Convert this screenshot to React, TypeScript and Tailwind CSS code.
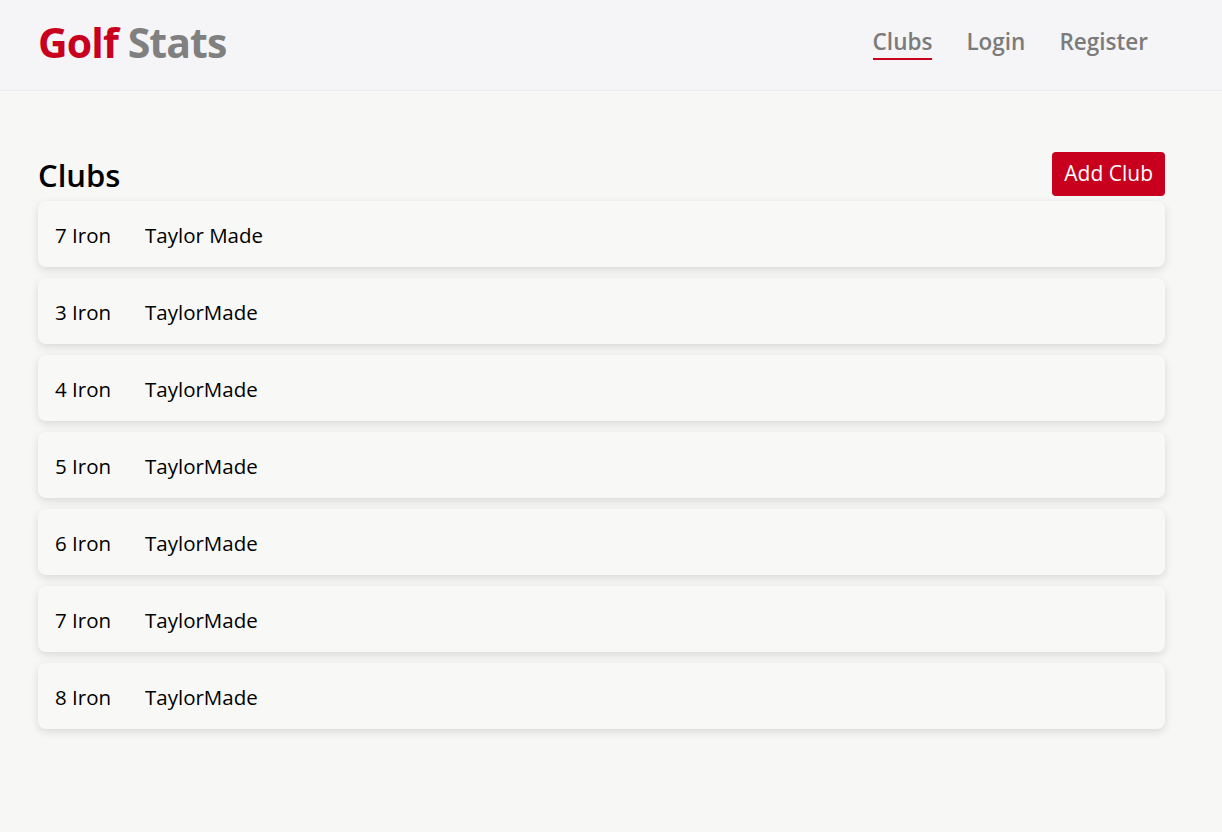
import React from 'react';

const clubs = [
  { id: 1, name: "7 Iron", brand: "Taylor Made" },
  { id: 2, name: "3 Iron", brand: "TaylorMade" },
  { id: 3, name: "4 Iron", brand: "TaylorMade" },
  { id: 4, name: "5 Iron", brand: "TaylorMade" },
  { id: 5, name: "6 Iron", brand: "TaylorMade" },
  { id: 6, name: "7 Iron", brand: "TaylorMade" },
  { id: 7, name: "8 Iron", brand: "TaylorMade" },
];

const App = () => {
  return (
    <div className="min-h-[832px] bg-[#f7f7f5] font-['Segoe_UI','Open_Sans',sans-serif] text-black">
      {/* Header */}
      <header className="h-[91px] bg-[#f5f5f8] border-b border-[#ebebeb] flex items-center justify-between pl-[38px] pr-[74px]">
        <h1 className="text-[41px] font-bold tracking-[-0.9px] leading-none pb-[6px]">
          <span className="text-[#c8001e]">Golf</span>{" "}
          <span className="text-[#808080]">Stats</span>
        </h1>
        <nav className="flex items-center gap-[34px] text-[22.5px] font-semibold text-[#7b7b7b] pb-[6px]">
          <a className="relative">
            Clubs
            <span className="absolute left-0 right-0 bottom-[-1px] h-[2px] bg-[#c8001e]" />
          </a>
          <a>Login</a>
          <a>Register</a>
        </nav>
      </header>

      {/* Content */}
      <main className="px-[38px] pt-[61px] w-[1203px]">
        <div className="flex items-end justify-between">
          <h2 className="text-[31px] font-semibold leading-none pb-[5px]">Clubs</h2>
          <button className="h-[44px] px-[12px] rounded-[4px] bg-[#c8001e] text-white text-[21px]">
            Add Club
          </button>
        </div>
        <div className="flex flex-col gap-[11px] mt-[5px]">
          {clubs.map(club => (
            <div
              key={club.id}
              className="h-[66px] flex items-center pl-[17px] pt-[3px] rounded-[8px] bg-[#f8f8f6] shadow-[0_3px_8px_rgba(0,0,0,0.12)] text-[20.5px]"
            >
              <span className="w-[90px]">{club.name}</span>
              <span>{club.brand}</span>
            </div>
          ))}
        </div>
      </main>
    </div>
  );
};

export default App;
